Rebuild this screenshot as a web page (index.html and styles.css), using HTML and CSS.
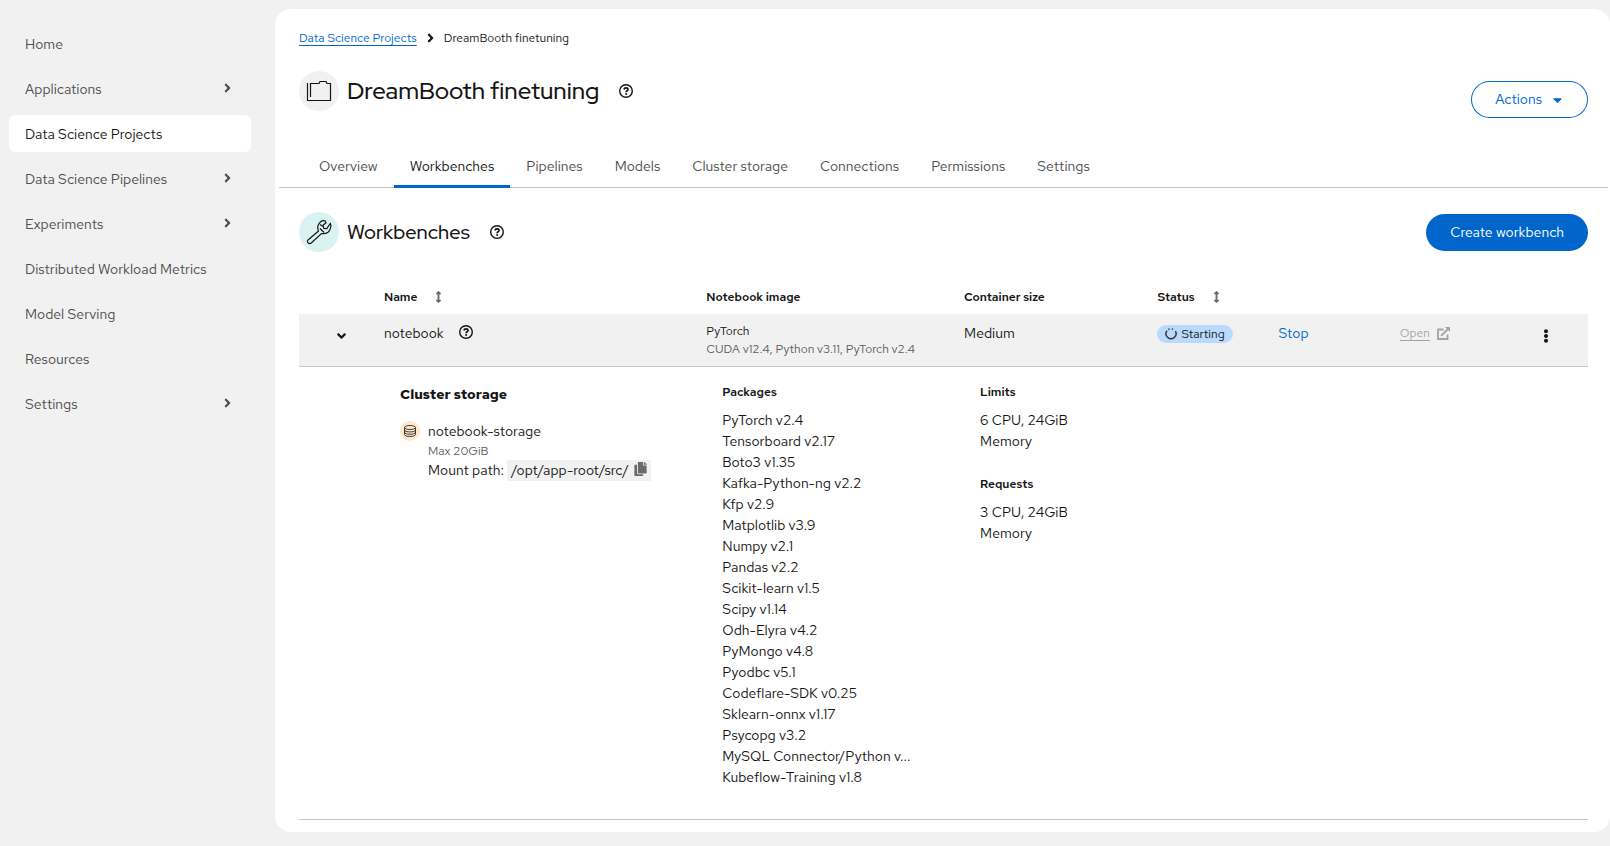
FILE: index.html
```html
<!DOCTYPE html>
<html lang="en">
<head>
<meta charset="utf-8">
<title>DreamBooth finetuning</title>
<link rel="stylesheet" href="styles.css">
</head>
<body>
<svg class="defs" aria-hidden="true">
  <symbol id="angle-right" viewBox="0 0 256 512"><path d="M224.3 273l-136 136c-9.4 9.4-24.6 9.4-33.9 0l-22.6-22.6c-9.4-9.4-9.4-24.6 0-33.9l96.4-96.4-96.4-96.4c-9.4-9.4-9.4-24.6 0-33.9L54.3 103c9.4-9.4 24.6-9.4 33.9 0l136 136c9.5 9.4 9.5 24.6.1 34z"/></symbol>
  <symbol id="angle-down" viewBox="0 0 320 512"><path d="M143 352.3L7 216.3c-9.4-9.4-9.4-24.6 0-33.9l22.6-22.6c9.4-9.4 24.6-9.4 33.9 0l96.4 96.4 96.4-96.4c9.4-9.4 24.6-9.4 33.9 0l22.6 22.6c9.4 9.4 9.4 24.6 0 33.9l-136 136c-9.2 9.4-24.4 9.4-33.8 0z"/></symbol>
  <symbol id="caret-down" viewBox="0 0 320 512"><path d="M31.3 192h257.3c17.8 0 26.7 21.5 14.1 34.1L174.1 354.8c-7.8 7.8-20.5 7.8-28.3 0L17.2 226.1C4.6 213.5 13.5 192 31.3 192z"/></symbol>
  <symbol id="sort" viewBox="0 0 256 512"><path d="M214.059 377.941H168V134.059h46.059c21.382 0 32.09-25.851 16.971-40.971L144.971 7.029c-9.373-9.373-24.568-9.373-33.941 0L24.971 93.088c-15.119 15.119-4.411 40.971 16.971 40.971H88v243.882H41.941c-21.382 0-32.09 25.851-16.971 40.971l86.059 86.059c9.373 9.373 24.568 9.373 33.941 0l86.059-86.059c15.12-15.119 4.412-40.971-16.97-40.971z"/></symbol>
  <symbol id="kebab" viewBox="0 0 192 512"><path d="M96 184c39.8 0 72 32.2 72 72s-32.2 72-72 72-72-32.2-72-72 32.2-72 72-72zM24 80c0 39.8 32.2 72 72 72s72-32.2 72-72S135.8 8 96 8 24 40.2 24 80zm0 352c0 39.8 32.2 72 72 72s72-32.2 72-72-32.2-72-72-72-72 32.2-72 72z"/></symbol>
  <symbol id="copy" viewBox="0 0 448 512"><path d="M320 448v40c0 13.255-10.745 24-24 24H24c-13.255 0-24-10.745-24-24V120c0-13.255 10.745-24 24-24h72v296c0 30.879 25.121 56 56 56h168zm0-344V0H152c-13.255 0-24 10.745-24 24v368c0 13.255 10.745 24 24 24h272c13.255 0 24-10.745 24-24V128H344c-13.2 0-24-10.8-24-24zm120.971-31.029L375.029 7.029A24 24 0 0 0 358.059 0H352v96h96v-6.059a24 24 0 0 0-7.029-16.97z"/></symbol>
  <symbol id="help" viewBox="0 0 14 14"><g fill="none" stroke="currentColor"><circle cx="7" cy="7" r="6.300" stroke-width="1.400"/><path d="M5 5.500C5.200 4.300 6 3.900 7 3.900c1.200 0 2 .6 2 1.600 0 1.300-1.900 1.300-1.900 2.700" stroke-width="1.700"/></g><circle cx="7.100" cy="10" r="1"/></symbol>
  <symbol id="external" viewBox="0 0 13 13"><g fill="none" stroke="currentColor" stroke-width="1.800"><path d="M6.500 2.500H1v9.500h9.500V7.500M4 8.800L11 2"/></g><path d="M8 0h5v5z"/></symbol>
</svg>
<div class="page">
  <nav class="sidebar" aria-label="Global">
    <ul>
      <li><a class="nav-item" href="#">Home</a></li>
      <li><button class="nav-item">Applications<svg class="angle"><use href="#angle-right"/></svg></button></li>
      <li><a class="nav-item current" href="#" aria-current="page">Data Science Projects</a></li>
      <li><button class="nav-item">Data Science Pipelines<svg class="angle"><use href="#angle-right"/></svg></button></li>
      <li><button class="nav-item">Experiments<svg class="angle"><use href="#angle-right"/></svg></button></li>
      <li><a class="nav-item" href="#">Distributed Workload Metrics</a></li>
      <li><a class="nav-item" href="#">Model Serving</a></li>
      <li><a class="nav-item" href="#">Resources</a></li>
      <li><button class="nav-item">Settings<svg class="angle"><use href="#angle-right"/></svg></button></li>
    </ul>
  </nav>
  <main class="main">
    <nav class="breadcrumb" aria-label="Breadcrumb">
      <a href="#">Data Science Projects</a>
      <svg class="angle"><use href="#angle-right"/></svg>
      <span>DreamBooth finetuning</span>
    </nav>
    <header class="title-row">
      <div class="heading">
        <span class="badge gray"><svg class="badge-icon" viewBox="0 0 24 24"><path d="M.5 4v17.500h23V4.500h-3.500l-1-2h-6l-1 2h-8.500v13.500"/></svg></span>
        <h1>DreamBooth finetuning</h1>
        <button class="plain help" aria-label="Project details"><svg><use href="#help"/></svg></button>
      </div>
      <button class="btn outline">Actions<svg class="caret"><use href="#caret-down"/></svg></button>
    </header>
    <nav class="tabs" aria-label="Project sections">
      <a href="#">Overview</a>
      <a href="#" class="active" aria-current="page">Workbenches</a>
      <a href="#">Pipelines</a>
      <a href="#">Models</a>
      <a href="#">Cluster storage</a>
      <a href="#">Connections</a>
      <a href="#">Permissions</a>
      <a href="#">Settings</a>
    </nav>
    <section class="section">
      <div class="section-head">
        <div class="heading">
          <span class="badge teal"><svg class="badge-icon" viewBox="0 0 24 24"><path d="M1 20L11.500 11C10.300 8 10.700 5 12.500 2.800 14 1 16 .3 18 .8L19 2.800 16 5.300l.8 3.200 3 .2L23.300 3.500l.6 1.500c0 3-.9 5.500-2.900 7.200-2 1.500-4.500 1.500-6.500 1.300L4.500 22.800C2.500 24.500-1 22.500 1 20z"/><path d="M13 4.500l3 2M13 8.500l4 4"/></svg></span>
          <h2>Workbenches</h2>
          <button class="plain help" aria-label="About workbenches"><svg><use href="#help"/></svg></button>
        </div>
        <button class="btn primary">Create workbench</button>
      </div>
      <table class="table">
        <colgroup><col class="c-toggle"><col class="c-name"><col class="c-image"><col class="c-size"><col class="c-status"><col class="c-action"><col class="c-action"><col></colgroup>
        <thead>
          <tr>
            <td></td>
            <th scope="col"><button class="plain sort">Name<svg><use href="#sort"/></svg></button></th>
            <th scope="col">Notebook image</th>
            <th scope="col">Container size</th>
            <th scope="col"><button class="plain sort">Status<svg><use href="#sort"/></svg></button></th>
            <td></td><td></td><td></td>
          </tr>
        </thead>
        <tbody>
          <tr class="row">
            <td><button class="plain toggle" aria-label="Collapse row" aria-expanded="true"><svg><use href="#angle-down"/></svg></button></td>
            <td><div class="name">notebook<button class="plain help" aria-label="Notebook details"><svg><use href="#help"/></svg></button></div></td>
            <td class="image"><div class="small">PyTorch</div><div class="small muted nowrap">CUDA v12.4, Python v3.11, PyTorch v2.4</div></td>
            <td>Medium</td>
            <td><span class="status"><svg viewBox="0 0 12 12"><path d="M10.400 3.200A5 5 0 1 1 2 2.700"/><path d="M3.300 1.500l1.200-.5M6.800 .9l1.200.4"/></svg>Starting</span></td>
            <td><button class="plain link">Stop</button></td>
            <td><a class="open" aria-disabled="true"><span>Open</span><svg><use href="#external"/></svg></a></td>
            <td><button class="plain kebab" aria-label="Actions"><svg><use href="#kebab"/></svg></button></td>
          </tr>
          <tr class="details">
            <td></td>
            <td>
              <h3>Cluster storage</h3>
              <div class="storage">
                <span class="badge orange"><svg viewBox="0 0 12 12"><ellipse cx="6" cy="2.500" rx="5.500" ry="2"/><path d="M.5 2.500v7c0 2.600 11 2.600 11 0v-7M.5 5c0 2.600 11 2.600 11 0M.5 7.300c0 2.600 11 2.600 11 0"/></svg></span>
                <div>
                  <div>notebook-storage</div>
                  <div class="small muted">Max 20GiB</div>
                  <div class="mount">Mount path: <span class="code"><code>/opt/app-root/src/</code><button class="plain copy" aria-label="Copy path"><svg><use href="#copy"/></svg></button></span></div>
                </div>
              </div>
            </td>
            <td>
              <h4>Packages</h4>
              <ul class="list">
                <li>PyTorch v2.4</li><li>Tensorboard v2.17</li><li>Boto3 v1.35</li><li>Kafka-Python-ng v2.2</li><li>Kfp v2.9</li><li>Matplotlib v3.9</li><li>Numpy v2.1</li><li>Pandas v2.2</li><li>Scikit-learn v1.5</li><li>Scipy v1.14</li><li>Odh-Elyra v4.2</li><li>PyMongo v4.8</li><li>Pyodbc v5.1</li><li>Codeflare-SDK v0.25</li><li>Sklearn-onnx v1.17</li><li>Psycopg v3.2</li><li>MySQL Connector/Python v...</li><li>Kubeflow-Training v1.8</li>
              </ul>
            </td>
            <td>
              <h4>Limits</h4>
              <p>6 CPU, 24GiB<br>Memory</p>
              <h4>Requests</h4>
              <p>3 CPU, 24GiB<br>Memory</p>
            </td>
            <td></td><td></td><td></td><td></td>
          </tr>
        </tbody>
      </table>
    </section>
  </main>
</div>
</body>
</html>
```
FILE: styles.css
```css
* { box-sizing: border-box; }
body {
  margin: 0;
  background: #f1f1f1;
  color: #151515;
  font: 14px/21px "Red Hat Text", Roboto, sans-serif;
}
h1, h2, h3, h4, p, ul { margin: 0; padding: 0; }
ul { list-style: none; }
svg { display: block; fill: currentColor; }
.defs { position: absolute; width: 0; height: 0; }
button { font: inherit; color: inherit; cursor: pointer; }
.plain { background: none; border: 0; padding: 0; }
.small { font-size: 12px; line-height: 18px; }
.muted { color: #5c5c5c; }
.nowrap { white-space: nowrap; }

.page { display: flex; align-items: flex-start; padding: 9px 0 14px; min-height: 100vh; }
.sidebar { flex: 0 0 275px; padding: 16px 24px 0 9px; }
.sidebar ul { display: flex; flex-direction: column; gap: 8px; }
.nav-item {
  display: flex;
  align-items: center;
  justify-content: space-between;
  width: 100%;
  padding: 9px 16px 7px;
  border: 0;
  border-radius: 6px;
  background: none;
  color: #4d4d4d;
  text-align: left;
  text-decoration: none;
}
.nav-item .angle { margin: 0 4px 3px 0; }
.nav-item.current { background: #fff; color: #151515; }
.angle { width: 7px; height: 14px; }

.main { flex: 1; min-width: 0; background: #fff; border-radius: 16px; padding: 20px 0 12px; }
.breadcrumb {
  display: flex;
  align-items: center;
  gap: 10px;
  padding: 0 24px;
  font-size: 12px;
  line-height: 18px;
}
.breadcrumb a { color: #06c; text-underline-offset: 3px; }

.title-row, .section-head { display: flex; justify-content: space-between; align-items: center; }
.title-row { padding: 24px 22px 0 24px; align-items: flex-start; }
.title-row .btn { margin-top: 10px; }
.heading { display: flex; align-items: center; gap: 8px; }
.badge {
  display: flex;
  align-items: center;
  justify-content: center;
  flex: none;
  width: 40px;
  height: 40px;
  border-radius: 50%;
}
.badge svg { width: 24px; height: 24px; fill: none; stroke: #151515; stroke-width: 1.2; overflow: visible; }
.badge.gray { background: #f1f1f1; }
.badge.teal { background: #daf2f2; }
.badge.orange { background: #ffe8cc; width: 20px; height: 20px; }
.badge.orange svg { width: 12px; height: 12px; stroke-width: 0.8; }
h1, h2 { font-family: "Red Hat Display", "Red Hat Text", Roboto, sans-serif; font-weight: 500; }
h1 { font-size: 24px; line-height: 32px; }
h2 { font-size: 20px; line-height: 28px; }
.help svg { width: 14px; height: 14px; }
.heading .help { margin-left: 12px; }

.btn {
  display: flex;
  align-items: center;
  gap: 11px;
  padding: 8px 24px;
  border: 0;
  border-radius: 999px;
}
.outline { background: #fff; color: #06c; box-shadow: inset 0 0 0 1px #06c; }
.primary { background: #06c; color: #fff; }
.caret { width: 9px; height: 14px; }
.outline { padding-right: 26px; }

.tabs {
  display: flex;
  margin: 26px 2px 0 4px;
  padding-left: 24px;
  border-bottom: 1px solid #c7c7c7;
}
.tabs a { padding: 12px 16px 8px; margin-bottom: -1px; color: #4d4d4d; text-decoration: none; border-bottom: 3px solid transparent; }
.tabs .active { color: #151515; border-color: #06c; }

.section { padding: 24px 22px 0 24px; }
.table { width: 100%; margin-top: 28px; table-layout: fixed; border-collapse: separate; border-spacing: 0; }
.c-toggle { width: 6.6%; }
.c-name { width: 25%; }
.c-image { width: 20%; }
.c-size { width: 15%; }
.c-status, .c-action { width: 9.4%; }
.table td, .table th { padding: 8px 0; text-align: left; vertical-align: top; }
.table th { font-size: 12px; line-height: 18px; font-weight: 600; }
.sort { display: flex; align-items: center; gap: 18px; font-weight: 600; }
.sort svg { width: 7px; height: 12px; color: #6a6a6a; }
.table .row td { padding-top: 9px; background: #f1f1f1; border-bottom: 1px solid #c7c7c7; }
.table .row .image { padding-top: 8px; }
.toggle { display: flex; height: 26px; align-items: center; margin: 0 auto; }
.toggle svg { width: 9px; height: 14px; }
.name { display: flex; align-items: flex-start; gap: 15px; }
.name .help { padding-top: 2px; }
.status {
  display: inline-flex;
  align-items: center;
  gap: 4px;
  margin-top: 2px;
  padding: 0 8px;
  border-radius: 999px;
  background: #b9dafc;
  font-size: 12px;
  line-height: 18px;
  vertical-align: top;
}
.status svg { width: 12px; height: 12px; fill: none; stroke: #383838; stroke-width: 1.5; overflow: visible; }
.link { color: #06c; }
.open { display: flex; align-items: center; gap: 7px; color: #a3a3a3; font-size: 12px; }
.open span { text-decoration: underline; text-underline-offset: 3px; }
.open svg { width: 13px; height: 13px; }
.kebab { display: flex; height: 26px; align-items: center; margin: 0 39px 0 auto; }
.kebab svg { width: 6px; height: 14px; }

.table .details td { padding: 16px 16px 31px; border-bottom: 1px solid #c7c7c7; }
h3 { font-size: 14px; line-height: 22px; font-weight: 700; margin-bottom: 16px; }
h4 { font-size: 12px; line-height: 18px; font-weight: 600; margin-bottom: 9px; }
p + h4 { margin-top: 23px; }
.storage { display: flex; gap: 8px; }
.mount { white-space: nowrap; }
.code { display: inline-flex; align-items: flex-start; gap: 5px; padding: 0 4px; background: #f1f1f1; vertical-align: top; }
code { font-family: inherit; }
.copy { color: #6a6a6a; padding-top: 2px; }
.copy svg { width: 13px; height: 14px; }
.list { white-space: nowrap; }
```
